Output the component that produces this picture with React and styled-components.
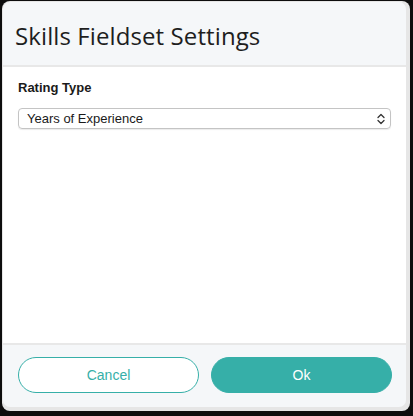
import React from "react";
import styled, { createGlobalStyle } from "styled-components";

const Global = createGlobalStyle`
  html, body { margin: 0; padding: 0; background: #0d0d0d; }
  body { width: 413px; height: 416px; overflow: hidden; }
`;

const Screen = styled.div`
  width: 413px;
  height: 416px;
  box-sizing: border-box;
  padding: 1px 3px 5px 2px;
  background: #0d0d0d;
  display: flex;
`;

const Frame = styled.div`
  flex: 1;
  display: flex;
  background: #e6e6e6;
  border-radius: 8px;
  padding: 1px 4px 4px 1px;
`;

const Dialog = styled.div`
  flex: 1;
  display: flex;
  flex-direction: column;
  background: #f5f7f9;
  border-radius: 7px;
  overflow: hidden;
  font-family: "Liberation Sans", Arial, sans-serif;
  color: #222;
`;

const Header = styled.div`
  height: 63px;
  display: flex;
  align-items: center;
  padding: 0 12px;
  border-bottom: 2px solid #e8e8e8;
`;

const Title = styled.h1`
  margin: 0;
  font-family: "Open Sans", sans-serif;
  font-weight: 500;
  font-size: 24px;
  letter-spacing: 0.1px;
  color: #1e1e1e;
  padding-top: 4px;
`;

const Body = styled.div`
  flex: 1;
  background: #fff;
  padding: 13px 15px;
  display: flex;
  flex-direction: column;
  gap: 13px;
`;

const Label = styled.label`
  font-size: 13px;
  font-weight: 700;
  color: #1a1a1a;
`;

const SelectBox = styled.div`
  height: 21px;
  border: 1px solid #c4c4c4;
  border-radius: 4px;
  box-sizing: border-box;
  display: flex;
  align-items: center;
  justify-content: space-between;
  padding: 0 4px 0 8px;
  font-size: 13px;
  color: #1a1a1a;
  box-shadow: 0 1px 1px rgba(0, 0, 0, 0.08);
`;

const Footer = styled.div`
  height: 64px;
  border-top: 2px solid #e8e8e8;
  display: grid;
  grid-template-columns: 1fr 1fr;
  gap: 12px;
  padding: 12px 14px 0 15px;
  box-sizing: border-box;
`;

const Button = styled.button`
  height: 36px;
  border-radius: 18px;
  border: 1px solid #36afa8;
  background: ${(p) => (p.$primary ? "#36afa8" : "#fff")};
  color: ${(p) => (p.$primary ? "#fff" : "#36afa8")};
  font-family: "Liberation Sans", Arial, sans-serif;
  font-size: 14px;
  cursor: pointer;
`;

const Chevrons = () => (
  <svg width="10" height="12" viewBox="0 0 10 12" fill="none" stroke="#333" strokeWidth="1.3" strokeLinecap="round" strokeLinejoin="round">
    <path d="M2 4.5 L5 1.5 L8 4.5" />
    <path d="M2 7.5 L5 10.5 L8 7.5" />
  </svg>
);

export default function App() {
  return (
    <>
      <Global />
      <Screen>
        <Frame>
          <Dialog>
            <Header>
              <Title>Skills Fieldset Settings</Title>
            </Header>
            <Body>
              <Label>Rating Type</Label>
              <SelectBox>
                <span>Years of Experience</span>
                <Chevrons />
              </SelectBox>
            </Body>
            <Footer>
              <Button>Cancel</Button>
              <Button $primary>Ok</Button>
            </Footer>
          </Dialog>
        </Frame>
      </Screen>
    </>
  );
}
